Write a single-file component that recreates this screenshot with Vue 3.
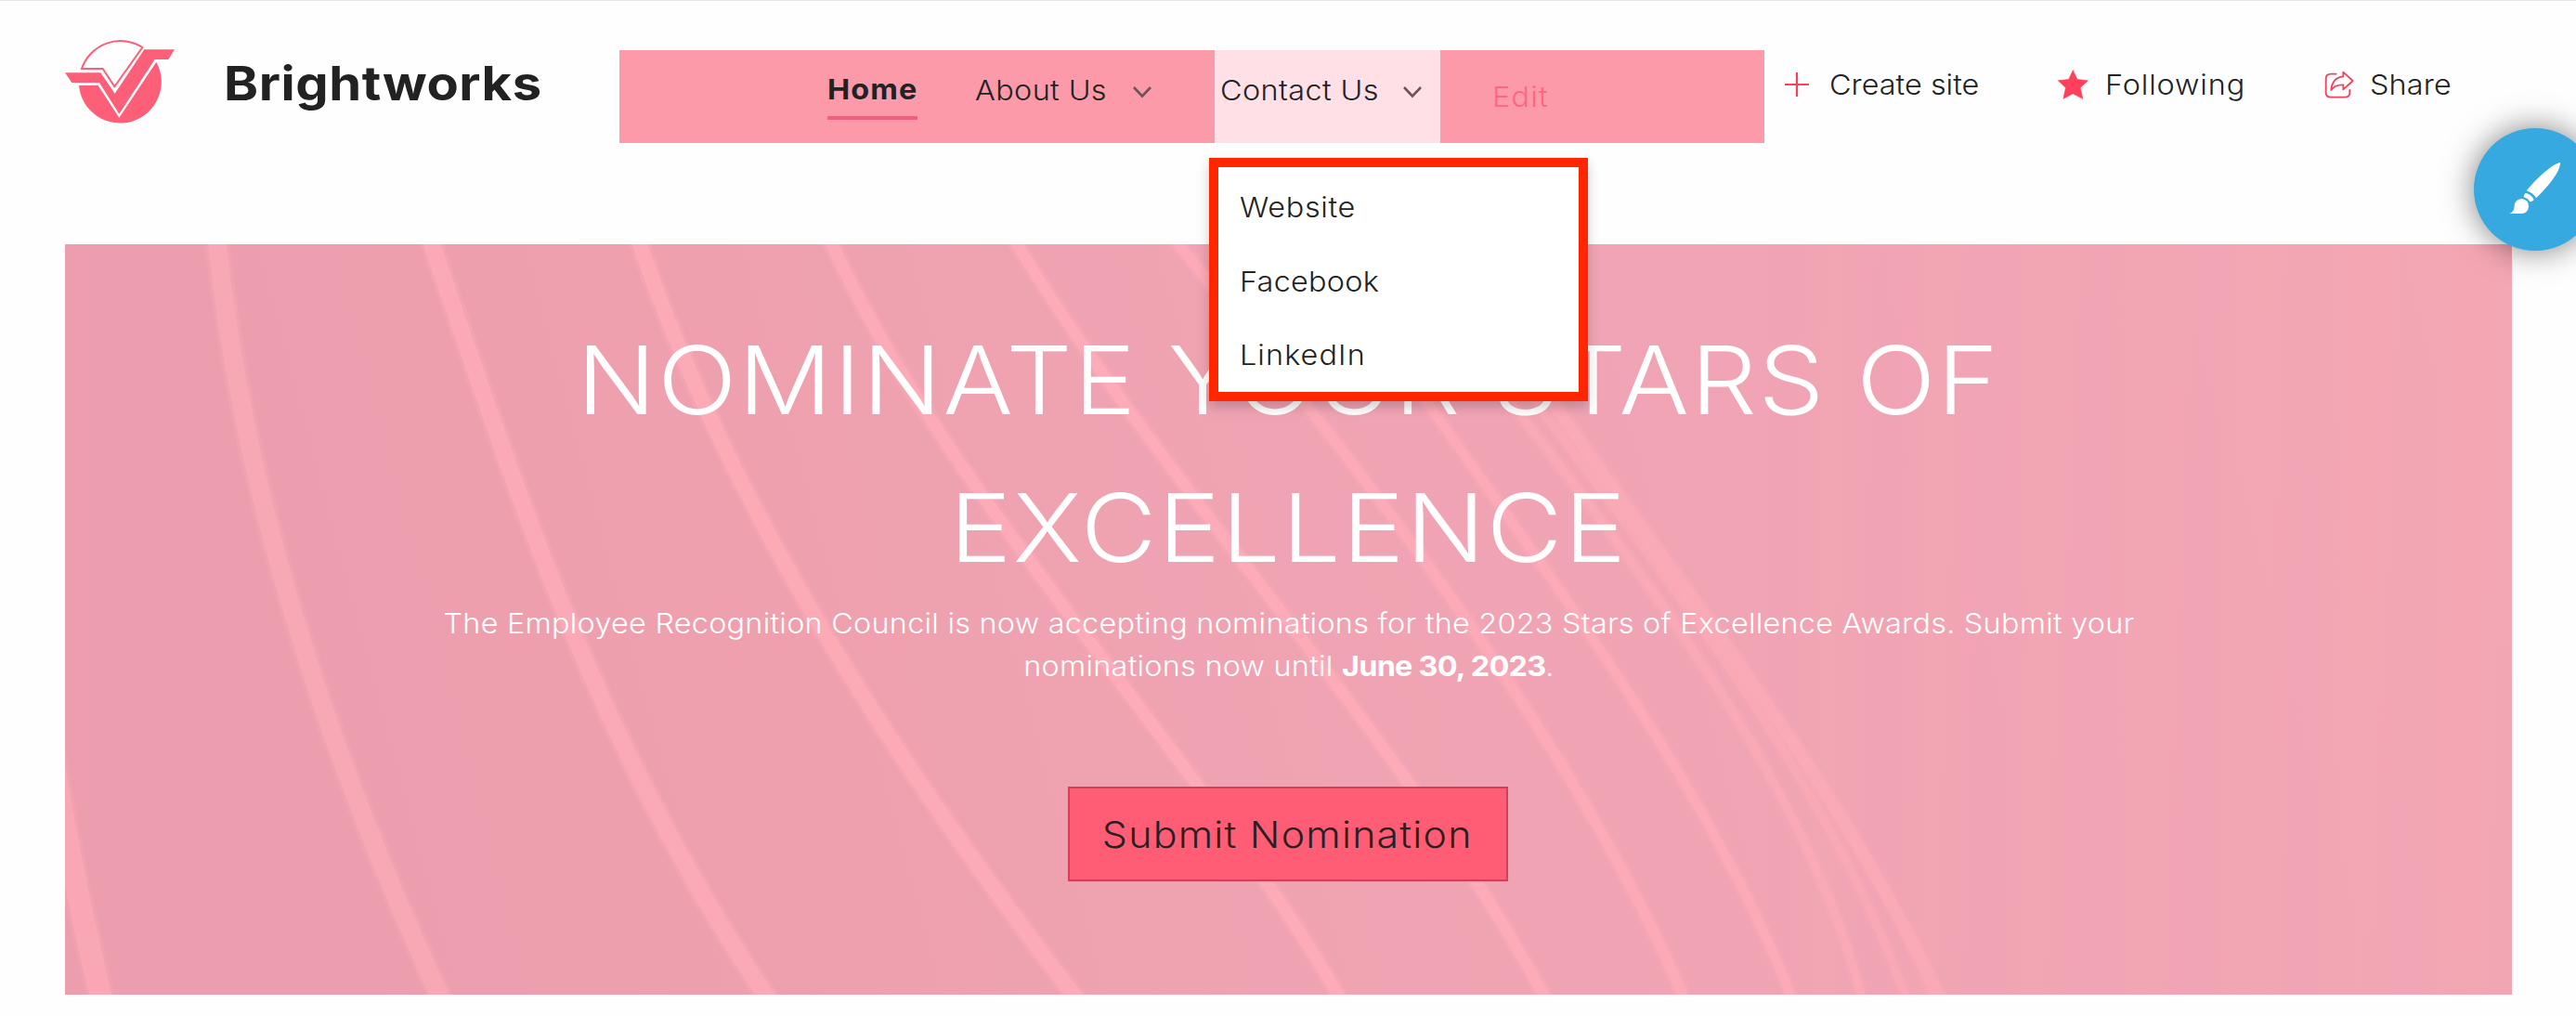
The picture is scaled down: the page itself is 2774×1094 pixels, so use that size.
<template>
	<div class="page">
		<header class="site-header">
			<svg class="logo" viewBox="0 0 378 312">
				<path class="logo-line" d="M66 114H134L172 172L262 45A132 132 0 0 0 66 114Z" />
				<path class="logo-fill" d="M12 127H127L173 194L268 52H366L346 84H302L187 260L123 159H34Z" />
				<path class="logo-fill" d="M57 168H119L187 272L307 92A133.5 133.5 0 1 1 57 168Z" />
			</svg>
			<div class="brand"><span class="wide">Brightworks</span></div>

			<nav class="nav">
				<a class="nav-item home"><span class="wide">Home</span></a>
				<a class="nav-item about">
					<span class="wide">About Us</span>
					<svg class="chevron" viewBox="0 0 22 14"><path d="M2 2L11 11.5L20 2" /></svg>
				</a>
				<div class="nav-item contact">
					<span class="wide">Contact Us</span>
					<svg class="chevron" viewBox="0 0 22 14"><path d="M2 2L11 11.5L20 2" /></svg>
					<ul class="dropdown">
						<li v-for="link in contactLinks" :key="link.key">
							<span class="wide" :class="link.key">{{ link.label }}</span>
						</li>
					</ul>
				</div>
				<a class="nav-item edit"><span class="wide">Edit</span></a>
			</nav>

			<div class="actions">
				<a class="action create">
					<svg class="icon-plus" viewBox="0 0 26 26"><path d="M13 0V26M0 13H26" /></svg>
					<span class="wide">Create site</span>
				</a>
				<a class="action following">
					<svg class="icon-star" viewBox="48 27 101 98">
						<path d="M98 29L112 59L147 63L122 87L130 123L98 106L66 123L74 87L49 63L84 59Z" />
					</svg>
					<span class="wide">Following</span>
				</a>
				<a class="action share">
					<svg class="icon-share" viewBox="906 31 96 90">
						<path d="M944 42H928Q911 42 911 58V102Q911 117 928 117H972Q988 117 988 102V94" />
						<path d="M967 36L998 64L967 92V77Q940 76 928 94Q931 54 967 50Z" />
					</svg>
					<span class="wide">Share</span>
				</a>
			</div>
		</header>

		<section class="hero">
			<svg class="rays" viewBox="0 0 2635 808" preserveAspectRatio="none">
				<g v-for="(ray, i) in rays" :key="i" :opacity="ray.opacity">
					<path class="ray-glow" :d="curve(ray.x)" :stroke-width="ray.width + 7" />
					<path class="ray" :d="curve(ray.x)" :stroke-width="ray.width" />
				</g>
			</svg>
			<div class="hero-content">
				<h1>NOMINATE YOUR STARS OF<br />EXCELLENCE</h1>
				<p>
					The Employee Recognition Council is now accepting nominations for the 2023 Stars of Excellence Awards. Submit your
					nominations now until <strong>June 30, 2023</strong>.
				</p>
				<button type="button"><span>Submit Nomination</span></button>
			</div>
		</section>

		<button class="design-fab" type="button" aria-label="Design">
			<svg viewBox="42 54 396 396">
				<path d="M321 165C323 182 302 224 243 280Q235 264 212 256C255 205 300 168 321 165Z" />
				<path d="M209 263Q231 269 236 286Q230 293 222 291Q217 280 203 277Q203 268 209 263Z" />
				<path d="M158 329Q172 325 173 305Q175 284 197 282Q219 285 219 307Q217 330 195 330H162Z" />
			</svg>
		</button>
	</div>
</template>

<script setup>
const contactLinks = [
	{ key: 'website', label: 'Website' },
	{ key: 'facebook', label: 'Facebook' },
	{ key: 'linkedin', label: 'LinkedIn' }
];

// x: where each ray is at 0, 1/3, 2/3 and the full height of the hero
const rays = [
	{ width: 24, opacity: 0.7, x: [-88, -55, -16, 38] },
	{ width: 20, opacity: 0.65, x: [164, 211, 292, 403] },
	{ width: 18, opacity: 0.8, x: [395, 489, 601, 754] },
	{ width: 16, opacity: 0.9, x: [619, 735, 893, 1086] },
	{ width: 13, opacity: 0.9, x: [826, 987, 1187, 1371] },
	{ width: 12, opacity: 0.9, x: [1025, 1213, 1417, 1592] },
	{ width: 11, opacity: 0.85, x: [1199, 1411, 1598, 1742] },
	{ width: 10, opacity: 0.8, x: [1350, 1537, 1719, 1858] },
	{ width: 9, opacity: 0.7, x: [1425, 1633, 1817, 1934] },
	{ width: 9, opacity: 0.6, x: [1460, 1658, 1846, 1981] },
	{ width: 13, opacity: 0.7, x: [1490, 1672, 1862, 2016] }
];

const HERO_HEIGHT = 808;

// One cubic bezier through the four positions
const curve = ([a, b, c, d]) => {
	const c1 = (-5 * a + 18 * b - 9 * c + 2 * d) / 6;
	const c2 = (2 * a - 9 * b + 18 * c - 5 * d) / 6;
	const third = HERO_HEIGHT / 3;
	// short straight ends keep the stroke caps outside the hero
	return `M${a - (c1 - a) / 8} ${-third / 8}L${a} 0C${c1} ${third} ${c2} ${third * 2} ${d} ${HERO_HEIGHT}L${d + (d - c2) / 8} ${HERO_HEIGHT + third / 8}`;
};
</script>

<style>
body {
	margin: 0;
	background: #fff;
}
</style>

<style scoped>
.page {
	position: relative;
	width: 100%;
	height: 1094px;
	overflow: hidden;
	box-sizing: border-box;
	background: #fefefe;
	box-shadow: inset 0 1px 0 #e6e6e6;
	font-family: Inter, "Liberation Sans", sans-serif;
	font-size: 30px;
	font-weight: 360;
	color: #222;
}

/* Widened letterforms */
.wide {
	display: inline-block;
	transform: scaleX(1.08);
	transform-origin: left center;
}

.site-header {
	display: flex;
	align-items: flex-start;
	height: 263px;
	padding-left: 66px;
	box-sizing: border-box;
	white-space: nowrap;
}

.logo {
	flex: none;
	width: 126px;
	height: 104px;
	margin-top: 36px;
}

.logo-fill {
	fill: #fd5e78;
}

.logo-line {
	fill: none;
	stroke: #fd5e78;
	stroke-width: 6;
}

.brand {
	flex: 0 0 426px;
	margin: 50px 0 0 49px;
	font-size: 51px;
	font-weight: 700;
	line-height: 79px;
	letter-spacing: 0.5px;
}

.brand .wide {
	transform: scaleX(1.1);
}

.nav {
	display: flex;
	flex: none;
	width: 1233px;
	height: 100px;
	margin-top: 54px;
	padding-left: 224px;
	box-sizing: border-box;
	background: #fd9aa9;
}

.nav-item {
	display: flex;
	align-items: center;
	height: 86px;
}

.home {
	width: 97px;
	height: 75px;
	padding-top: 13px;
	box-sizing: border-box;
	border-bottom: 4px solid #f4607a;
	font-weight: 700;
	letter-spacing: 1px;
}

.about,
.contact {
	justify-content: space-between;
	box-sizing: border-box;
	letter-spacing: 0.35px;
}

.about {
	width: 191px;
	margin-left: 62px;
}

.contact {
	position: relative;
	width: 243px;
	height: 100px;
	margin-left: 67px;
	padding: 0 19px 14px 6px;
	background: #ffe0e6;
}

.edit {
	height: 100px;
	margin-left: 56px;
	color: #fb6782;
	letter-spacing: 1.1px;
}

.chevron {
	flex: none;
	width: 22px;
	height: 14px;
	margin-top: 4px;
	fill: none;
	stroke: #6b5558;
	stroke-width: 2.6;
}

.dropdown {
	position: absolute;
	z-index: 2;
	top: 116px;
	left: -6px;
	width: 408px;
	height: 262px;
	margin: 0;
	padding: 4px 0 0 23px;
	box-sizing: border-box;
	border: 10px solid #ff2600;
	background: #fff;
	box-shadow: 0 6px 12px rgba(0, 0, 0, 0.2);
	list-style: none;
	line-height: 79.5px;
}

.dropdown li {
	height: 79.5px;
}

.website {
	letter-spacing: 0.6px;
}

.facebook {
	letter-spacing: 0.25px;
}

.linkedin {
	letter-spacing: 1px;
}

.actions {
	display: flex;
	margin: 50px 0 0 22px;
}

.action {
	display: flex;
	align-items: center;
	height: 81px;
}

.create {
	gap: 22px;
	width: 211px;
	margin-right: 83px;
	letter-spacing: 0;
}

.following {
	gap: 18px;
	width: 204px;
	margin-right: 83px;
	letter-spacing: 0.8px;
}

.share {
	gap: 17px;
	letter-spacing: 0.1px;
}

.icon-plus {
	flex: none;
	width: 26px;
	height: 26px;
	fill: none;
	stroke: #f5415c;
	stroke-width: 2.2;
}

.icon-star {
	flex: none;
	width: 33px;
	height: 32px;
	fill: #ff3f5b;
	stroke: #ff3f5b;
	stroke-width: 2;
	stroke-linejoin: round;
}

.icon-share {
	flex: none;
	width: 32px;
	height: 30px;
	fill: none;
	stroke: #f5415c;
	stroke-width: 5.5;
	stroke-linecap: round;
	stroke-linejoin: round;
}

.hero {
	position: relative;
	height: 808px;
	margin: 0 69px 0 70px;
	overflow: hidden;
	background:
		repeating-linear-gradient(91deg, rgba(240, 160, 184, 0.16) 0 34px, rgba(246, 168, 176, 0.16) 62px 80px, rgba(240, 160, 184, 0.16) 114px) right / 800px 100% no-repeat,
		linear-gradient(75deg, #ec9dae 0%, #eea0ae 30%, #f0a4b3 55%, #f1a4b3 75%, #f4a7b3 100%);
}

/* The curves lie behind the hero text */
.rays {
	position: absolute;
	inset: 0;
	width: 100%;
	height: 100%;
}

.ray,
.ray-glow {
	fill: none;
	stroke: #ffacb9;
}

.ray-glow {
	opacity: 0.4;
}

.hero-content {
	position: relative;
	display: flex;
	flex-direction: column;
	align-items: center;
	padding-top: 67px;
	text-align: center;
	color: #fff;
}

h1 {
	margin: 0;
	font-size: 102px;
	font-weight: 320;
	line-height: 159px;
	letter-spacing: 1.5px;
	white-space: nowrap;
	transform: scaleX(1.1);
}

p {
	width: 1740px;
	margin: 0;
	font-weight: 330;
	line-height: 46px;
	letter-spacing: 0.22px;
	transform: scaleX(1.08);
}

strong {
	font-weight: 700;
	letter-spacing: -0.7px;
}

.hero-content button {
	width: 474px;
	height: 102px;
	margin: 107px 2px 0 0;
	padding: 0;
	border: 2px solid #d13f59;
	background: #ff5d76;
	font-family: inherit;
	font-size: 39px;
	font-weight: 360;
	letter-spacing: 1.1px;
	color: #2a2020;
}

.hero-content button span {
	display: inline-block;
	transform: scaleX(1.1);
}

.design-fab {
	position: absolute;
	z-index: 3;
	top: 138px;
	right: -22px;
	width: 132px;
	height: 132px;
	padding: 0;
	border: 0;
	border-radius: 50%;
	background: #37a9e1;
	box-shadow: 0 0 34px rgba(0, 0, 0, 0.5);
}

.design-fab svg {
	display: block;
	width: 132px;
	height: 132px;
	fill: #fff;
}
</style>
